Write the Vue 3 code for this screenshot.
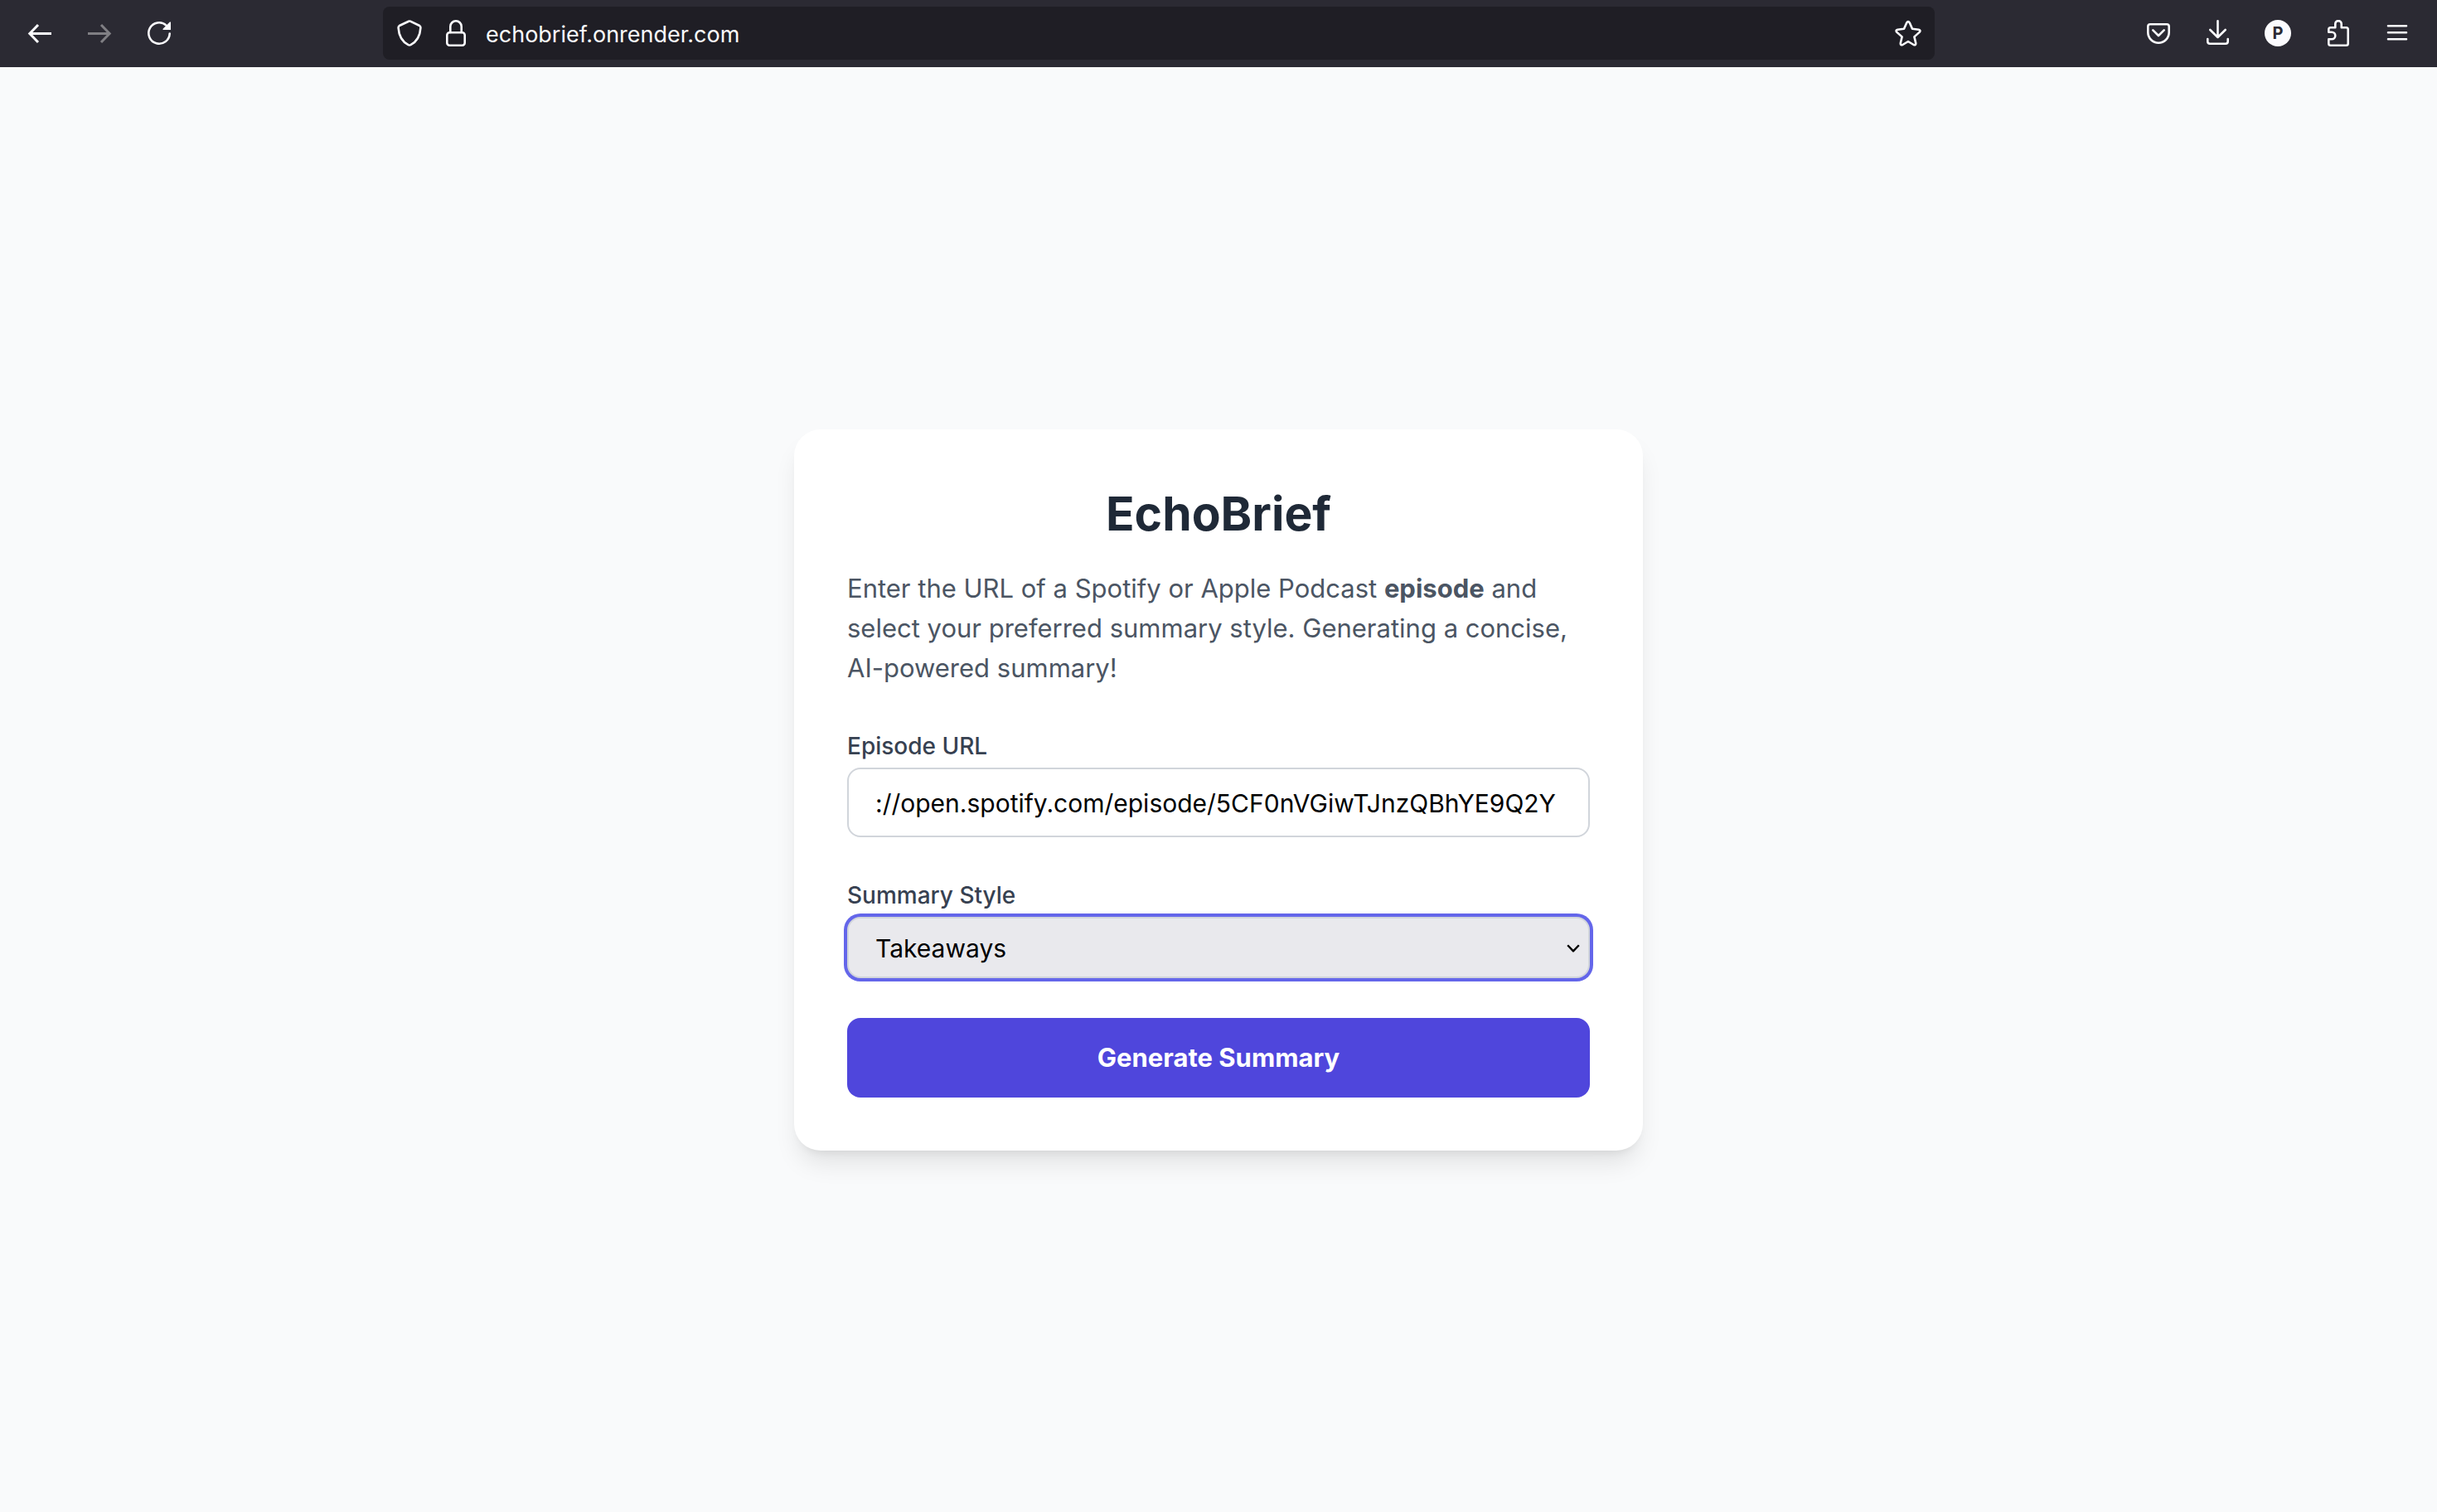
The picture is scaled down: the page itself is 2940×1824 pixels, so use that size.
<script setup>
import { ref } from 'vue'

const address = ref('echobrief.onrender.com')
const episodeUrl = ref('://open.spotify.com/episode/5CF0nVGiwTJnzQBhYE9Q2Y')
const styles = ['Takeaways']
const summaryStyle = ref('Takeaways')
</script>

<template>
  <div class="browser">
    <header class="toolbar">
      <nav class="tools" aria-label="Navigation">
        <button type="button" class="tool" aria-label="Back">
          <svg class="icon heavy" viewBox="0 0 32 32"><path d="M30 16.5H4M14 6 3.8 16.5 14 27" /></svg>
        </button>
        <button type="button" class="tool" aria-label="Forward" disabled>
          <svg class="icon heavy" viewBox="0 0 32 32"><path d="M2 16.5H28M18 6 28.2 16.5 18 27" /></svg>
        </button>
        <button type="button" class="tool" aria-label="Reload">
          <svg class="icon" viewBox="0 0 32 32">
            <path d="M28.7 16.5A12.7 12.7 0 1 1 24.5 6.6" />
            <path class="solid" d="M30 2.6V12H20.8Q20 11.6 20.6 10.8L28.8 2.6Q29.4 2.2 30 2.6Z" />
          </svg>
        </button>
      </nav>

      <div class="address">
        <svg class="icon" viewBox="0 0 32 32" aria-hidden="true">
          <path d="M15 1.7Q16 1.2 17 1.7L28.2 7Q29.5 7.8 29.4 9.6C28.9 18 26 25.6 17.4 30.2Q16 30.9 14.6 30.2C6 25.6 3.1 18 2.6 9.6Q2.5 7.8 3.8 7Z" />
        </svg>
        <svg class="icon" viewBox="0 0 32 32" aria-hidden="true">
          <rect x="5.3" y="15.3" width="21.4" height="15.4" rx="3" />
          <path d="M9.3 15V8A6.7 6.7 0 0 1 22.7 8V15" />
        </svg>
        <input v-model="address" class="address-text" type="text" aria-label="Address" spellcheck="false" />
        <button type="button" class="star" aria-label="Bookmark this page">
          <svg class="icon" viewBox="0 0 32 32">
            <path d="M14.2 3.4Q16 .8 17.8 3.4L21 10.8 28.7 11.7Q31.6 12.4 29.6 14.9L23.4 20.4 25.2 28Q25.5 31 22.6 30L16 26 9.4 30Q6.5 31 6.8 28L8.6 20.4 2.4 14.9Q.4 12.4 3.3 11.7L11 10.8Z" />
          </svg>
        </button>
      </div>

      <div class="tools">
        <button type="button" class="tool" aria-label="Save to Pocket">
          <svg class="icon" viewBox="0 0 32 32">
            <path d="M6 5.3H26Q28.7 5.3 28.7 8V15A12.7 12.7 0 0 1 3.3 15V8Q3.3 5.3 6 5.3Z" />
            <path d="M9.3 12.3 16 19 22.7 12.3" />
          </svg>
        </button>
        <button type="button" class="tool" aria-label="Downloads">
          <svg class="icon" viewBox="0 0 32 32">
            <path d="M15.5 1.3V20.5M6.3 12 15.5 21 24.7 12" />
            <path d="M3.3 23V26Q3.3 28.7 6 28.7H25Q27.7 28.7 27.7 26V23" />
          </svg>
        </button>
        <button type="button" class="tool" aria-label="Account"><span class="avatar">P</span></button>
        <button type="button" class="tool" aria-label="Extensions">
          <svg class="icon" viewBox="0 0 32 32">
            <path d="M5.3 14.7V11.5Q5.3 9.3 7.5 9.3H13.3V4.8A3.7 3.7 0 0 1 20.7 4.8V9.3H26.5Q28.7 9.3 28.7 11.5V28.5Q28.7 30.7 26.5 30.7H7.5Q5.3 30.7 5.3 28.5V23.3H9A4.3 4.3 0 0 0 9 14.7Z" />
          </svg>
        </button>
        <button type="button" class="tool" aria-label="Menu">
          <svg class="icon" viewBox="0 0 32 32"><path d="M5 7.3H27M5 15.3H27M5 23.3H27" /></svg>
        </button>
      </div>
    </header>

    <main class="page">
      <section class="card">
        <h1>EchoBrief</h1>
        <p>
          Enter the URL of a Spotify or Apple Podcast <strong>episode</strong> and
          select your preferred summary style. Generating a concise,
          AI-powered summary!
        </p>
        <form @submit.prevent>
          <div class="field">
            <label for="episode-url">Episode URL</label>
            <input id="episode-url" v-model="episodeUrl" class="control" type="text" spellcheck="false" />
          </div>
          <div class="field">
            <label for="summary-style">Summary Style</label>
            <div class="select-wrap">
              <select id="summary-style" v-model="summaryStyle" class="control select">
                <option v-for="s in styles" :key="s" :value="s">{{ s }}</option>
              </select>
              <svg class="chevron" viewBox="0 0 16 10" aria-hidden="true"><path d="M1.2 1.2 8 8.4 14.8 1.2" /></svg>
            </div>
          </div>
          <button type="submit" class="submit">Generate Summary</button>
        </form>
      </section>
    </main>
  </div>
</template>

<style>
body {
  background: #f9fafb;
}
</style>

<style scoped>
.browser {
  display: flex;
  flex-direction: column;
  min-height: 100vh;
  font-family: Inter, "Liberation Sans", sans-serif;
}

.browser *,
.browser {
  box-sizing: border-box;
}

button,
input,
select {
  margin: 0;
  font-family: inherit;
}

.toolbar {
  display: flex;
  align-items: center;
  padding: 8px 16px;
  border-bottom: 1px solid #2b2a33;
  background: #2b2a33;
  color: #fbfbfe;
}

.tools {
  display: flex;
  gap: 8px;
}

.tool {
  display: flex;
  align-items: center;
  justify-content: center;
  width: 64px;
  height: 64px;
  padding: 0;
  border: 0;
  background: none;
  color: #fbfbfe;
}

.tool:disabled {
  color: #807f84;
}

.icon {
  flex: none;
  display: block;
  width: 32px;
  height: 32px;
  fill: none;
  stroke: currentColor;
  stroke-width: 2.6;
  stroke-linecap: round;
  stroke-linejoin: round;
}

.heavy {
  stroke-width: 3;
  stroke-linecap: butt;
  stroke-linejoin: miter;
}

.solid {
  fill: currentColor;
  stroke: none;
}

.avatar {
  width: 32px;
  height: 32px;
  border-radius: 50%;
  background: #fbfbfe;
  color: #2b2a33;
  font-size: 20px;
  font-weight: 700;
  line-height: 32px;
  text-align: center;
}

.address {
  flex: 1;
  display: flex;
  align-items: center;
  height: 64px;
  margin: 0 238px;
  padding: 0 16px;
  gap: 24px;
  border-radius: 8px;
  background: #1f1e25;
}

.address-text {
  flex: 1;
  min-width: 0;
  margin-left: -4px;
  padding: 4px 0 0;
  border: 0;
  outline: 0;
  background: none;
  color: #fbfbfe;
  font-size: 27px;
  line-height: 40px;
}

.star {
  padding: 0;
  border: 0;
  background: none;
  color: #fbfbfe;
}

.page {
  flex: 1;
  display: flex;
  align-items: center;
  justify-content: center;
}

.card {
  width: 100%;
  max-width: 1024px;
  padding: 66px 64px 64px;
  border-radius: 32px;
  background: #fff;
  box-shadow: 0 20px 30px -6px rgba(0, 0, 0, 0.1), 0 8px 12px -8px rgba(0, 0, 0, 0.1);
}

h1 {
  margin: 0 0 30px;
  color: #1f2937;
  font-size: 57px;
  font-weight: 700;
  line-height: 72px;
  text-align: center;
}

p {
  margin: 0 0 48px;
  color: #4b5563;
  font-size: 31px;
  line-height: 48px;
}

.field {
  margin-bottom: 48px;
}

label {
  display: block;
  margin-bottom: 6px;
  padding-top: 2px;
  color: #374151;
  font-size: 28px;
  font-weight: 500;
  line-height: 40px;
}

.control {
  display: block;
  width: 100%;
  height: 84px;
  padding: 2px 32px 0;
  border: 2px solid #d1d5db;
  border-radius: 16px;
  outline: 0;
  background: #fff;
  color: #000;
  font-size: 30px;
}

.select-wrap {
  position: relative;
}

.select {
  height: 74px;
  appearance: none;
  background: #e9e9ed;
  box-shadow: 0 0 0 4px #6466ea;
}

.chevron {
  position: absolute;
  top: 33px;
  right: 12px;
  width: 16px;
  height: 10px;
  fill: none;
  stroke: #000;
  stroke-width: 2.4;
  stroke-linejoin: round;
  pointer-events: none;
}

.submit {
  display: block;
  width: 100%;
  padding: 24px 32px;
  border: 0;
  border-radius: 16px;
  background: #4f46dc;
  color: #fff;
  font-size: 31px;
  font-weight: 700;
  line-height: 48px;
}
</style>
